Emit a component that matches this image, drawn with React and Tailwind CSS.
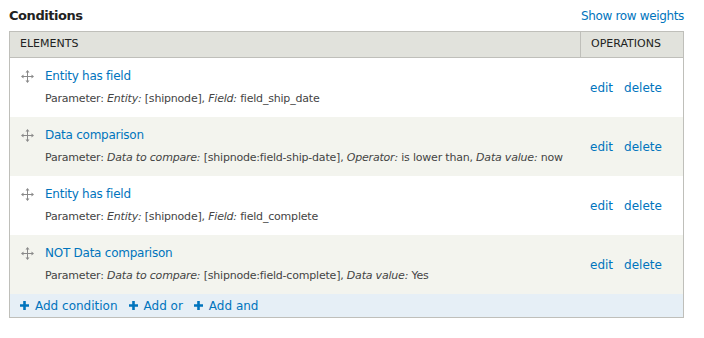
import React from 'react';

const rows = [
  {
    title: 'Entity has field',
    params: [['Entity', '[shipnode]'], ['Field', 'field_ship_date']],
  },
  {
    title: 'Data comparison',
    params: [['Data to compare', '[shipnode:field-ship-date]'], ['Operator', 'is lower than'], ['Data value', 'now']],
  },
  {
    title: 'Entity has field',
    params: [['Entity', '[shipnode]'], ['Field', 'field_complete']],
  },
  {
    title: 'NOT Data comparison',
    params: [['Data to compare', '[shipnode:field-complete]'], ['Data value', 'Yes']],
  },
];

const DragIcon = () => (
  <svg width="13" height="13" viewBox="0 0 13 13" className="text-[#8a8a8a]">
    <path d="M6.5 1v11M1 6.5h11" stroke="currentColor" strokeWidth="1" fill="none" />
    <path d="M6.5 0L4.5 2.5h4zM6.5 13l-2-2.5h4zM0 6.5l2.5-2v4zM13 6.5l-2.5-2v4z" fill="currentColor" />
  </svg>
);

const PlusIcon = () => (
  <svg width="9" height="9" viewBox="0 0 9 9">
    <path d="M3.2 0h2.6v3.2H9v2.6H5.8V9H3.2V5.8H0V3.2h3.2z" fill="#0074bd" />
  </svg>
);

const App = () => {
  return (
    <div className="w-[704px] h-[338px] bg-white px-[9px] pt-[6px] text-[#333] font-['DejaVu_Sans',sans-serif]">
      {/* Cabecera */}
      <div className="flex justify-between items-center h-[20px] w-[675px]">
        <h2 className="text-[13px] font-bold text-[#222] tracking-[-0.45px]">Conditions</h2>
        <a className="text-[12px] text-[#0074bd] tracking-[-0.35px]">Show row weights</a>
      </div>

      <div className="mt-[5px] w-[675px] border border-[#bfbfba]">
        <div className="flex h-[26px] bg-[#e1e2dc] border-b border-[#bfbfba] text-[11px] uppercase text-[#222]">
          <div className="flex-1 flex items-center pl-[10px]">Elements</div>
          <div className="w-[103px] flex items-center pl-[10px] border-l border-[#bfbfba]">Operations</div>
        </div>

        {rows.map((row, i) => (
          <div key={i} className={`flex h-[59px] ${i % 2 === 1 ? 'bg-[#f3f4ee]' : 'bg-white'}`}>
            <div className="flex-1 flex pl-[11px]">
              <div className="pt-[12px] w-[24px]">
                <DragIcon />
              </div>
              <div className="pt-[10px] whitespace-nowrap">
                <div className="text-[12px] text-[#0074bd] leading-[16px] tracking-[-0.25px]">{row.title}</div>
                <div className="mt-[8px] text-[11px] leading-[14px] text-[#444] tracking-[-0.2px]">
                  Parameter:{' '}
                  {row.params.map(([k, v], j) => (
                    <span key={j}>
                      <em>{k}:</em> {v}
                      {j < row.params.length - 1 ? ', ' : ''}
                    </span>
                  ))}
                </div>
              </div>
            </div>
            <div className="w-[103px] flex items-center gap-[11px] pl-[10px] text-[12px] text-[#0074bd]">
              <a>edit</a>
              <a>delete</a>
            </div>
          </div>
        ))}

        <div className="flex items-center gap-[11px] h-[23px] pl-[10px] bg-[#e6eff6] text-[12px] text-[#0074bd]">
          <a className="flex items-center gap-[6px]"><PlusIcon />Add condition</a>
          <a className="flex items-center gap-[6px]"><PlusIcon />Add or</a>
          <a className="flex items-center gap-[6px]"><PlusIcon />Add and</a>
        </div>
      </div>
    </div>
  );
};

export default App;
